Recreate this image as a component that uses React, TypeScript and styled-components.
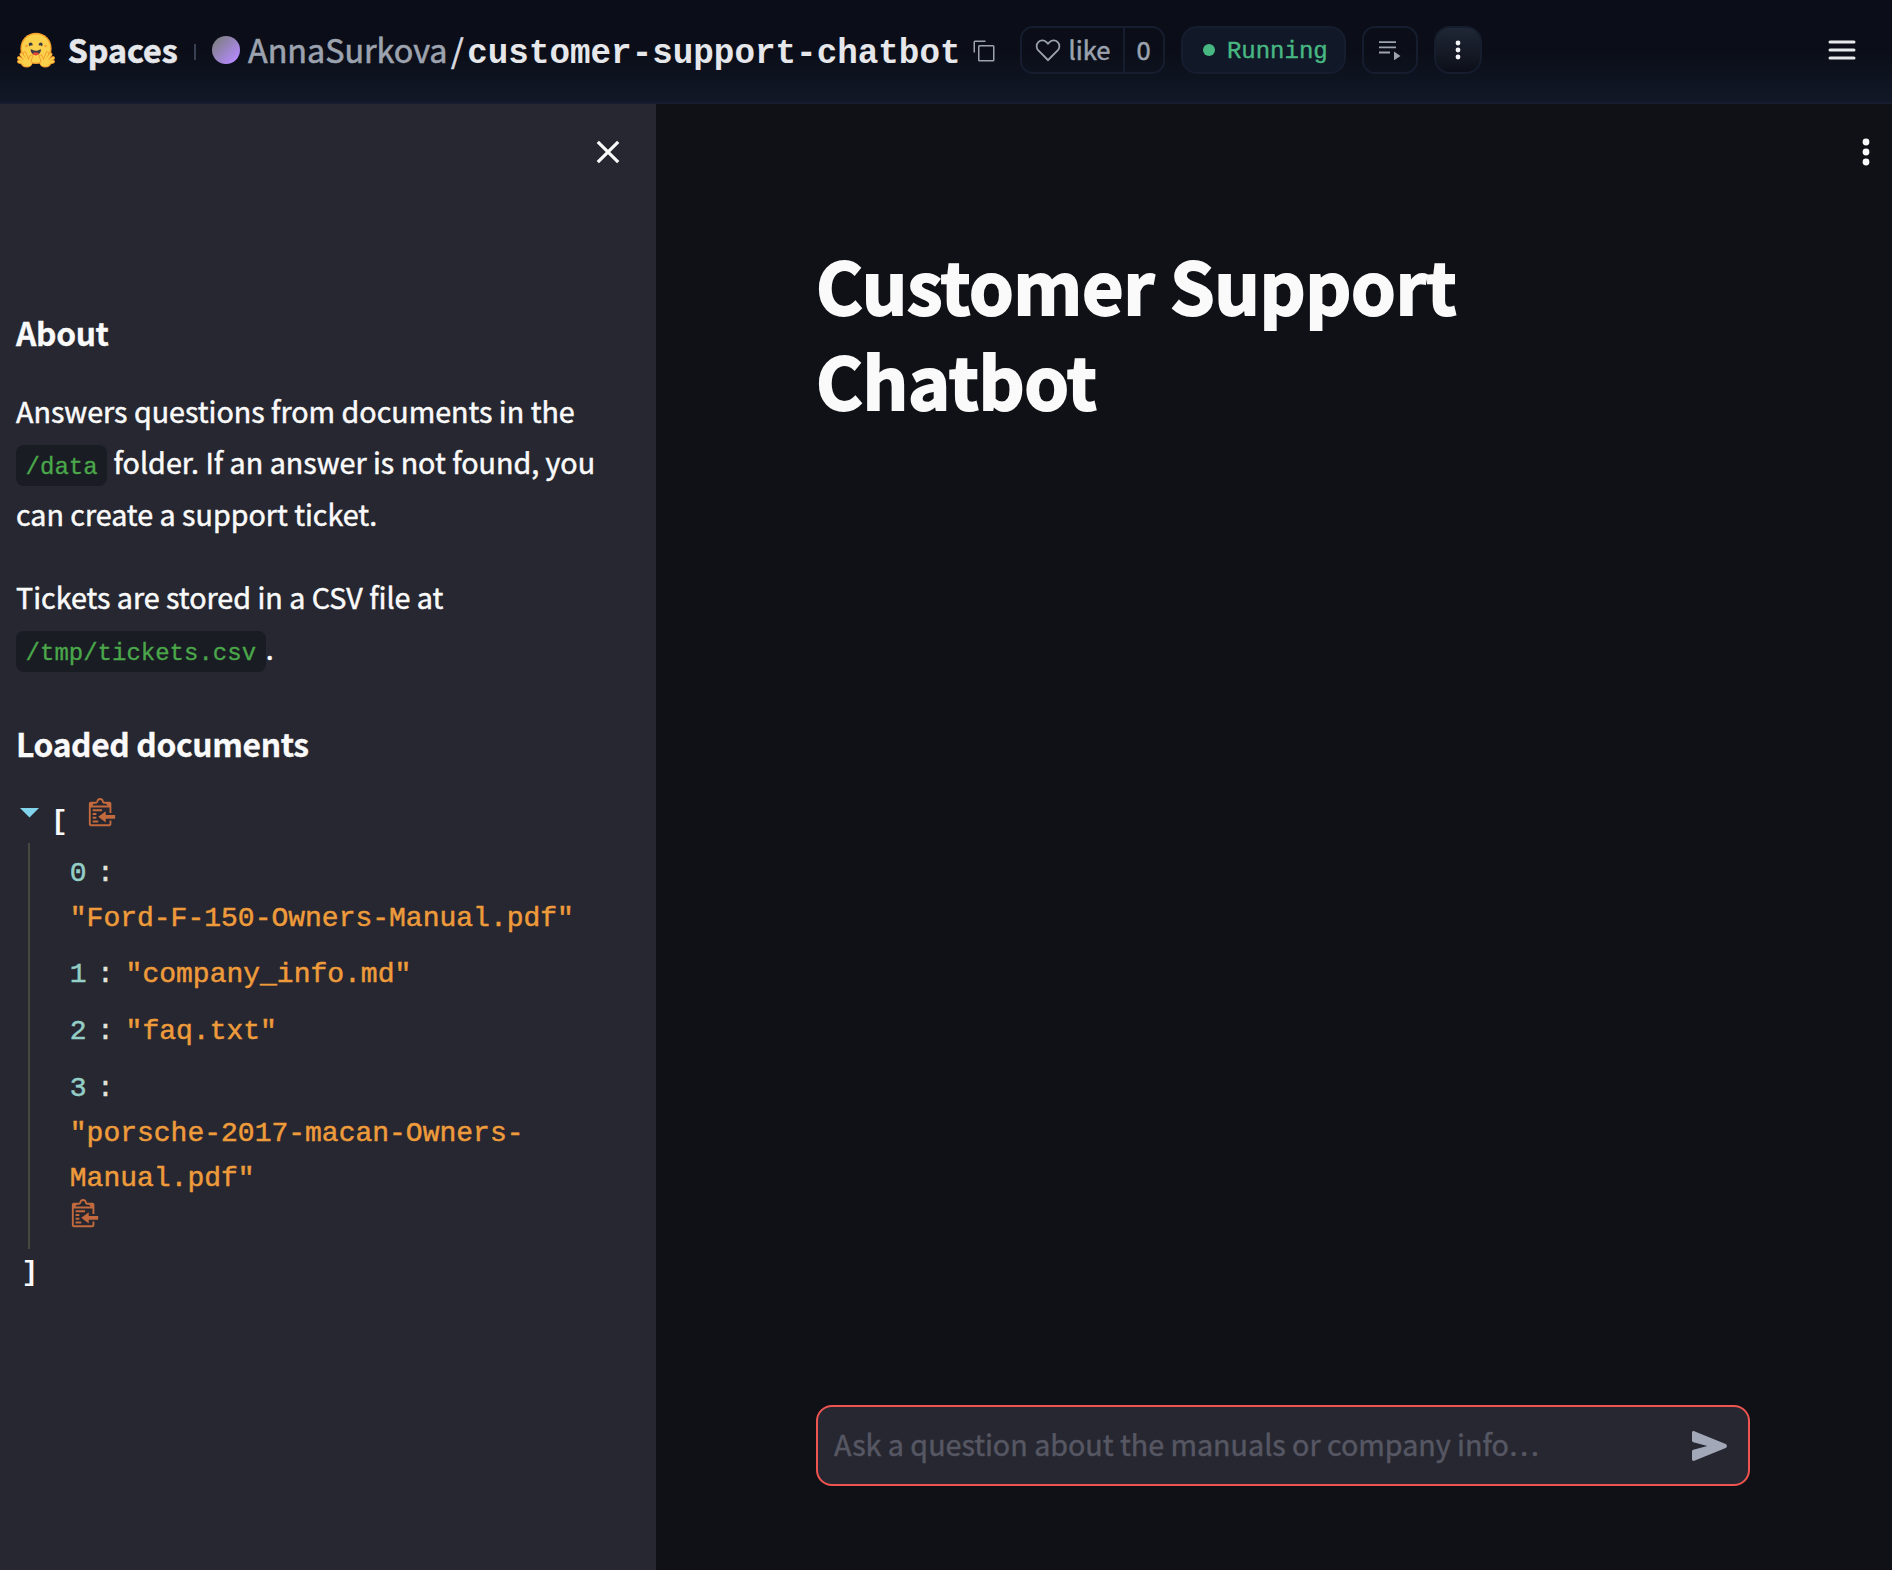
import React from 'react';
import styled, { createGlobalStyle } from 'styled-components';

const sans = "'Noto Sans CJK SC', 'Noto Sans', sans-serif";
const mono = "'Liberation Mono', 'DejaVu Sans Mono', monospace";

const GlobalStyle = createGlobalStyle`
  * { box-sizing: border-box; }
  body { margin: 0; background: #101116; font-family: ${sans}; }
  svg { display: block; flex: none; }
  button { margin: 0; padding: 0; border: 0; background: none; font: inherit; color: inherit; }
`;

const Page = styled.div`
  display: flex;
  flex-direction: column;
  height: 1570px;
  overflow: hidden;
`;

/* ---------- top bar ---------- */

const TopBar = styled.header`
  display: flex;
  align-items: center;
  flex: none;
  height: 104px;
  padding: 0 36px 2px 17px;
  border-bottom: 2px solid #161d2f;
  background: linear-gradient(to top, #111827, #0b0e18 50%, #0b0e18);
  white-space: nowrap;
`;

const Brand = styled.span`
  margin: -2px 0 0 12.7px;
  font-size: 32.2px;
  font-weight: 700;
  line-height: 44px;
  color: #e5e7eb;
  -webkit-text-stroke: 0.6px currentColor;
`;

const Divider = styled.span`
  width: 2px;
  height: 16px;
  margin: 4px 16px 0 16.3px;
  background: #374151;
`;

const Avatar = styled.span`
  width: 28px;
  height: 28px;
  border-radius: 50%;
  background: linear-gradient(135deg, #7f7f86 12%, #b58aff 88%);
`;

const Owner = styled.span`
  margin: -2px 0 0 8px;
  font-size: 32.3px;
  line-height: 44px;
  color: #9ca3af;
  -webkit-text-stroke: 0.6px currentColor;
`;

const Slash = styled.span`
  width: 16.3px;
  margin: -2px 0 0 3.4px;
  font-size: 32.3px;
  line-height: 44px;
  color: #d9dbe0;
  -webkit-text-stroke: 0.6px currentColor;
`;

const Repo = styled.span`
  margin: 8px 11px 0 0;
  font-family: ${mono};
  font-size: 34.26px;
  font-weight: 700;
  line-height: 44px;
  color: #e5e7eb;
`;

const CopyButton = styled.button`
  margin: 2px 24px 0 0;
  color: #9ca3af;
`;

const LikeBox = styled.div`
  display: flex;
  width: 145px;
  height: 48px;
  border: 2px solid #161d2f;
  border-radius: 13px;
  font-size: 25.5px;
  line-height: 42px;
  color: #9ca3af;
  -webkit-text-stroke: 0.5px currentColor;
`;

const LikeAction = styled.button`
  display: flex;
  align-items: center;
  gap: 7px;
  width: 103px;
  padding-left: 12px;
  border-right: 2px solid #161d2f;
`;

const LikeLabel = styled.span`
  margin-top: -2px;
`;

const LikeCount = styled.span`
  flex: 1;
  text-align: center;
`;

const Status = styled.div`
  display: flex;
  align-items: center;
  gap: 12.4px;
  width: 165px;
  height: 48px;
  margin-left: 16px;
  padding-left: 20px;
  border: 2px solid #161d2f;
  border-radius: 16px;
  background: #111827;
  color: #48b883;
`;

const StatusDot = styled.span`
  width: 12px;
  height: 12px;
  border-radius: 50%;
  background: currentColor;
`;

const StatusText = styled.span`
  margin-top: 4px;
  font: 24px/28px ${mono};
  -webkit-text-stroke: 0.4px currentColor;
`;

const IconButton = styled.button<{ $width: number; $raised?: boolean }>`
  display: flex;
  align-items: center;
  justify-content: center;
  width: ${p => p.$width}px;
  height: 48px;
  margin-left: 16px;
  border: 2px solid #161d2f;
  border-radius: ${p => (p.$raised ? 16 : 13)}px;
  background: ${p => (p.$raised ? 'linear-gradient(to bottom, #1f2735, #0c0f19)' : 'transparent')};
  color: ${p => (p.$raised ? '#f3f4f6' : '#9ca3af')};
`;

const MenuButton = styled.button`
  margin-left: auto;
  color: #e5e7eb;
`;

/* ---------- sidebar ---------- */

const Body = styled.div`
  display: flex;
  flex: 1;
  min-height: 0;
`;

const Sidebar = styled.aside`
  flex: none;
  width: 656px;
  background: #262730;
  color: #fafafa;
`;

const SidebarTop = styled.div`
  display: flex;
  justify-content: flex-end;
  height: 206.5px;
  padding: 36px 36px 0 0;
`;

const Heading = styled.h3`
  margin: 0;
  padding-left: 16px;
  font-size: 31.8px;
  font-weight: 700;
  line-height: 43px;
  letter-spacing: -0.36px;
  -webkit-text-stroke: 0.3px currentColor;
`;

const Paragraph = styled.p`
  margin: 31.4px 48px 0 16px;
  font-size: 28.66px;
  line-height: 51.4px;
  -webkit-text-stroke: 0.5px currentColor;

  & + & { margin-top: 31.6px; }
  & + ${Heading} { margin-top: 48.8px; }
`;

const Code = styled.code`
  padding: 9px 9.6px 4.5px;
  border-radius: 8px;
  background: #1a1c24;
  font: 24px/1 ${mono};
  color: #4aa84a;
  -webkit-text-stroke: 0.3px currentColor;
`;

const Tree = styled.div`
  padding-top: 24.6px;
  font-family: ${mono};
  font-size: 28px;
  line-height: 44.8px;
`;

const TreeRoot = styled.div`
  display: flex;
  align-items: flex-start;
  height: 52.7px;
`;

const Caret = styled.button`
  margin: 18px 0 0 20px;
  color: #81d4ec;
`;

const Bracket = styled.span<{ $indent: number; $top: number }>`
  display: block;
  width: 17px;
  margin: ${p => p.$top}px 0 0 ${p => p.$indent}px;
  font-weight: 700;
`;

const CopyNode = styled.button<{ $inline?: boolean }>`
  display: block;
  margin: ${p => (p.$inline ? '8px 0 0 18.5px' : '-8.2px 0 0 -0.3px')};
  color: #c26a3d;
`;

const TreeItems = styled.div`
  height: 406px;
  margin-left: 28px;
  padding: 3.2px 56px 0 39.8px;
  border-left: 2px solid #49483e;
`;

const TreeRow = styled.div`
  display: flex;
  flex-wrap: wrap;
  padding: 6px 0;
  -webkit-text-stroke: 0.5px currentColor;
`;

const Key = styled.span`
  color: #94cec6;
`;

const Colon = styled.span`
  margin: 0 11.8px 0 10.4px;
  color: #e2e2dc;
`;

const Value = styled.span`
  color: #ee9b3b;
`;

/* ---------- main panel ---------- */

const Main = styled.main`
  display: flex;
  flex: 1;
  flex-direction: column;
  padding-bottom: 84px;
  background: #101116;
`;

const MainTop = styled.div`
  display: flex;
  justify-content: flex-end;
  height: 132.6px;
  padding: 34px 22px 0 0;
  color: #fafafa;
`;

const Title = styled.h1`
  margin: 0 0 0 160px;
  font-size: 71.6px;
  font-weight: 700;
  line-height: 95px;
  letter-spacing: -0.35px;
  color: #fafafa;
  -webkit-text-stroke: 1.9px currentColor;
`;

const Composer = styled.form`
  display: flex;
  align-items: center;
  width: 934px;
  height: 81px;
  margin: auto 0 0 160px;
  padding: 0 21px 0 16px;
  border: 2px solid #ee5450;
  border-radius: 16px;
  background: #262730;
  color: #a3a8b8;
`;

const Prompt = styled.input`
  flex: 1;
  height: 48px;
  margin-top: -4px;
  padding: 0;
  border: 0;
  outline: 0;
  background: none;
  font: 28.66px/48px ${sans};
  color: #fafafa;
  -webkit-text-stroke: 0.5px currentColor;

  &::placeholder { color: #565763; opacity: 1; -webkit-text-stroke: 0.5px #565763; }
`;

/* ---------- drawings ---------- */

const fingers = [
  'M22 78 L5 73',
  'M22 76 L5 64',
  'M24 74 L11 55',
  'M27 73 L19 52',
  'M28 76 L36 60',
];

const Hand = () => (
  <g strokeLinecap="round">
    {fingers.map(d => <path key={d} d={d} stroke="#f59a2e" strokeWidth="9.5" />)}
    <ellipse cx="24" cy="77" rx="14.5" ry="10.5" fill="#f59a2e" />
    {fingers.map(d => <path key={d} d={d} stroke="#fbd04a" strokeWidth="5.2" />)}
    <ellipse cx="25" cy="77" rx="11.5" ry="8" fill="#fbd04a" />
  </g>
);

const HuggingFace = () => (
  <svg width="38" height="36" viewBox="0 0 95 88" fill="none">
    <circle cx="47.5" cy="40" r="39" fill="#f5a02c" />
    <circle cx="47.5" cy="40" r="35.5" fill="#fbd04a" />
    <circle cx="23.5" cy="34" r="3.4" fill="#f5a43a" />
    <circle cx="71.5" cy="34" r="3.4" fill="#f5a43a" />
    <path fill="#3a3b45" d="M58.5 32.3c1.3.4 1.8 3 3.1 2.4a5 5 0 1 0-6.8-2.1c.6 1.2 2.6-.7 3.7-.3ZM35 32.3c-1.3.4-1.8 3-3.1 2.4a5 5 0 1 1 6.7-2.1c-.6 1.2-2.5-.7-3.6-.3Z" />
    <path fill="#3a3b45" d="M47 57c9.400 0 13-8.800 13-13.400 0-2.300-1.600-1.600-4.100-.4-2.300 1.200-5.400 2.800-8.900 2.800-7.200 0-13-7-13-2.400S37.600 57 47 57Z" />
    <path fill="#f04438" d="M39.500 54c1-3.400 4.500-4.500 7.500-3 3-1.500 6.500-.4 7.500 3-2 2-4.500 3-7.500 3s-5.500-1-7.500-3Z" />
    <Hand />
    <g transform="matrix(-1 0 0 1 95 0)"><Hand /></g>
  </svg>
);

const CopyIcon = () => (
  <svg width="24" height="24" viewBox="0 0 32 32" fill="currentColor">
    <path d="M28 10v18H10V10h18m0-2H10a2 2 0 0 0-2 2v18a2 2 0 0 0 2 2h18a2 2 0 0 0 2-2V10a2 2 0 0 0-2-2Z" />
    <path d="M4 18H2V4a2 2 0 0 1 2-2h14v2H4Z" />
  </svg>
);

const HeartIcon = () => (
  <svg width="28" height="28" viewBox="0 0 32 32" fill="currentColor">
    <path d="M22.450 6a5.470 5.470 0 0 1 3.910 1.640 5.700 5.700 0 0 1 0 8L16 26.130 5.640 15.640a5.700 5.700 0 0 1 0-8 5.480 5.480 0 0 1 7.820 0L16 10.240l2.530-2.580A5.440 5.440 0 0 1 22.450 6m0-2a7.470 7.470 0 0 0-5.340 2.240L16 7.360l-1.110-1.120a7.490 7.490 0 0 0-10.680 0 7.720 7.720 0 0 0 0 10.820L16 29l11.790-11.940a7.720 7.720 0 0 0 0-10.820A7.490 7.490 0 0 0 22.450 4Z" />
  </svg>
);

const LogsIcon = () => (
  <svg width="22" height="20" viewBox="0 0 22 20" fill="currentColor">
    <path d="M0 1.200h17v1.900H0zM0 6.400h17v1.900H0zM0 11.600h11v1.900H0zM15 11.500l6.500 4.400-6.500 4.400z" />
  </svg>
);

const Dots = ({ r, gap }: { r: number; gap: number }) => (
  <svg width="8" height="28" viewBox="0 0 8 28" fill="currentColor">
    {[-1, 0, 1].map(n => <circle key={n} cx="4" cy={14 + n * gap} r={r} />)}
  </svg>
);

const MenuIcon = () => (
  <svg width="28" height="20" viewBox="0 0 28 20" stroke="currentColor" strokeWidth="3" strokeLinecap="round">
    <path d="M2 2h24M2 10h24M2 18h24" />
  </svg>
);

const CloseIcon = () => (
  <svg width="24" height="24" viewBox="0 0 24 24" stroke="currentColor" strokeWidth="3.2">
    <path d="M1.800 1.800l20.400 20.400M22.200 1.800L1.800 22.200" />
  </svg>
);

const CaretIcon = () => (
  <svg width="19" height="10" viewBox="0 0 19 10" fill="currentColor">
    <path d="M0 0h19l-9.500 9.600z" />
  </svg>
);

const ClipboardIcon = () => (
  <svg width="30" height="30" viewBox="0 0 40 40" fill="currentColor">
    <path d="M30 35H5V12.500h25V20h2.500V7.500C32.500 6.100 31.400 5 30 5h-7.500c0-2.800-2.200-5-5-5s-5 2.200-5 5H5C3.600 5 2.500 6.100 2.500 7.500V35c0 1.400 1.100 2.500 2.500 2.500h25c1.400 0 2.500-1.100 2.500-2.500v-5H30v5zM10 7.500h2.500S15 6.400 15 5s1.100-2.500 2.500-2.500S20 3.600 20 5s1.300 2.500 2.500 2.500H25s2.500 1.100 2.500 2.500h-20c0-1.500 1.100-2.500 2.500-2.500zm-2.500 20h5V25h-5v2.500zm17.500-5v-5L15 25l10 7.500v-5h12.500v-5H25zm-17.500 10H15V30H7.500v2.500zM20 15H7.500v2.500H20V15zm-7.500 5h-5v2.500h5V20z" />
  </svg>
);

const SendIcon = () => (
  <svg width="35" height="30" viewBox="0 0 105 90" fill="currentColor">
    <path d="M0 5C0 1 3-1 7 .5L101 39c5 2.500 5 9.500 0 12L7 89.500C3 91 0 89 0 85V62c0-3 1.500-5 4-5.500L46 45 4 33.500C1.500 33 0 31 0 28Z" />
  </svg>
);

const documents = [
  'Ford-F-150-Owners-Manual.pdf',
  'company_info.md',
  'faq.txt',
  'porsche-2017-macan-Owners-Manual.pdf',
];

export default function App() {
  return (
    <Page>
      <GlobalStyle />
      <TopBar>
        <HuggingFace />
        <Brand>Spaces</Brand>
        <Divider />
        <Avatar />
        <Owner>AnnaSurkova</Owner>
        <Slash>/</Slash>
        <Repo>customer-support-chatbot</Repo>
        <CopyButton aria-label="Copy"><CopyIcon /></CopyButton>
        <LikeBox>
          <LikeAction><HeartIcon /><LikeLabel>like</LikeLabel></LikeAction>
          <LikeCount>0</LikeCount>
        </LikeBox>
        <Status><StatusDot /><StatusText>Running</StatusText></Status>
        <IconButton $width={56} aria-label="Logs"><LogsIcon /></IconButton>
        <IconButton $width={48} $raised aria-label="More"><Dots r={2.4} gap={7} /></IconButton>
        <MenuButton aria-label="Menu"><MenuIcon /></MenuButton>
      </TopBar>
      <Body>
        <Sidebar>
          <SidebarTop><CloseIcon /></SidebarTop>
          <Heading>About</Heading>
          <Paragraph>
            Answers questions from documents in the <Code>/data</Code> folder. If an answer is not found, you can create a support ticket.
          </Paragraph>
          <Paragraph>
            Tickets are stored in a CSV file at <br /><Code>/tmp/tickets.csv</Code>.
          </Paragraph>
          <Heading>Loaded documents</Heading>
          <Tree>
            <TreeRoot>
              <Caret aria-label="Collapse"><CaretIcon /></Caret>
              <Bracket $indent={12} $top={10.3}>[</Bracket>
              <CopyNode $inline aria-label="Copy list"><ClipboardIcon /></CopyNode>
            </TreeRoot>
            <TreeItems>
              {documents.map((name, i) => (
                <TreeRow key={name}>
                  <Key>{i}</Key>
                  <Colon>:</Colon>
                  <Value>"{name}"</Value>
                </TreeRow>
              ))}
              <CopyNode aria-label="Copy item"><ClipboardIcon /></CopyNode>
            </TreeItems>
            <Bracket $indent={21.4} $top={2.8}>]</Bracket>
          </Tree>
        </Sidebar>
        <Main>
          <MainTop><Dots r={3.4} gap={10} /></MainTop>
          <Title>Customer Support<br />Chatbot</Title>
          <Composer>
            <Prompt placeholder="Ask a question about the manuals or company info…" />
            <SendIcon />
          </Composer>
        </Main>
      </Body>
    </Page>
  );
}
